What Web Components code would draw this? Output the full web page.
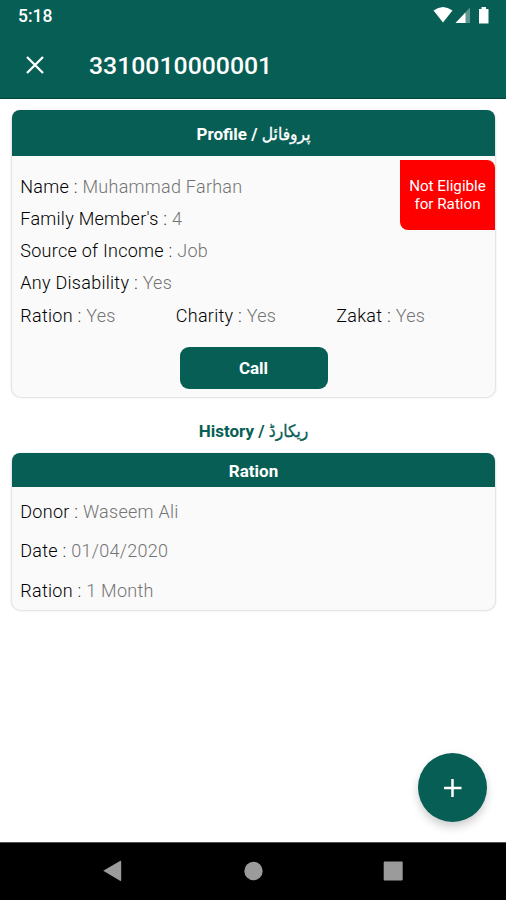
<!DOCTYPE html>
<html lang="en">
<head>
<meta charset="utf-8">
<title>Profile</title>
<style>
  html, body {
    margin: 0;
    height: 100%;
    background: #fff;
  }
  body {
    --green: #075e54;
    font-family: Roboto, "DejaVu Sans", sans-serif;
    overflow: hidden;
  }
</style>
</head>
<body>
<profile-screen></profile-screen>
<script>
class StatusBar extends HTMLElement {
  connectedCallback() {
    this.attachShadow({ mode: 'open' });
    this.shadowRoot.innerHTML = `
      <style>
        :host {
          display: flex;
          justify-content: space-between;
          height: 32px;
          padding: 0 15px 0 18px;
          color: #fff;
          font-size: 17.5px;
          font-weight: 500;
          line-height: 33px;
        }
        svg { display: block; fill: #fff; }
      </style>
      <slot></slot>
      <svg width="58" height="32" viewBox="0 0 58 32">
        <path d="M0.5 10.5Q10 3.5 19.5 10.5L10 22.5Z"/>
        <path d="M37 7.5V23H22.5Z" opacity=".35"/>
        <path d="M32.5 12.5V23H22.5Z"/>
        <path d="M46 9h2.5V7h4.5v2h2.5v14.5H46Z"/>
      </svg>
    `;
  }
}
customElements.define('status-bar', StatusBar);

class AppBar extends HTMLElement {
  connectedCallback() {
    this.attachShadow({ mode: 'open' });
    this.shadowRoot.innerHTML = `
      <style>
        :host {
          display: flex;
          align-items: center;
          gap: 45px;
          height: 67px;
          padding-left: 26px;
          color: #fff;
          border-bottom: 1px solid #044238;
          box-sizing: border-box;
        }
        svg { display: block; stroke: #fff; stroke-width: 2.3; }
        h1 {
          margin: 0;
          padding-top: 2px;
          font-size: 24.8px;
          font-weight: 500;
          line-height: 32px;
        }
      </style>
      <svg width="18" height="18" viewBox="0 0 18 18"><path d="M1 1L17 17M17 1L1 17"/></svg>
      <h1><slot></slot></h1>
    `;
  }
}
customElements.define('app-bar', AppBar);

class InfoCard extends HTMLElement {
  connectedCallback() {
    this.attachShadow({ mode: 'open' });
    this.shadowRoot.innerHTML = `
      <style>
        :host {
          display: block;
          position: relative;
          box-sizing: border-box;
          background: #fafafa;
          border: 1px solid #e4e6e6;
          border-top: 0;
          border-radius: 10px;
          box-shadow: 0 0 2px rgba(0, 0, 0, .12);
        }
        header {
          display: flex;
          align-items: center;
          justify-content: center;
          height: var(--header-height, 46px);
          padding-top: 1px;
          box-sizing: border-box;
          border-radius: 8px 8px 0 0;
          background: var(--green);
          color: #fff;
          font-size: 17px;
          font-weight: 700;
        }
        .body { padding: var(--body-padding, 0 8px); }
      </style>
      <header><slot name="title"></slot></header>
      <div class="body"><slot></slot></div>
    `;
  }
}
customElements.define('info-card', InfoCard);

class InfoField extends HTMLElement {
  connectedCallback() {
    this.attachShadow({ mode: 'open' });
    this.shadowRoot.innerHTML = `
      <style>
        :host {
          display: block;
          color: #747474;
          font-size: 18px;
          font-weight: 300;
          line-height: var(--row-height, 32.25px);
          letter-spacing: .27px;
          white-space: nowrap;
        }
        b { color: #000; font-weight: 350; }
        i { color: #333; font-style: normal; }
      </style>
      <b>${this.getAttribute('label')}</b> <i>:</i> <slot></slot>
    `;
  }
}
customElements.define('info-field', InfoField);

class StatusFlag extends HTMLElement {
  connectedCallback() {
    this.attachShadow({ mode: 'open' });
    // sits in the card's top right corner, over the rows
    this.shadowRoot.innerHTML = `
      <style>
        :host {
          position: absolute;
          top: 50px;
          right: 0;
          display: flex;
          align-items: center;
          justify-content: center;
          width: 95px;
          height: 70px;
          border-radius: 0 8px 0 8px;
          background: #fe0000;
          color: #fff;
          font-size: 15.2px;
          line-height: 18px;
          text-align: center;
        }
      </style>
      <span><slot></slot></span>
    `;
  }
}
customElements.define('status-flag', StatusFlag);

class CallButton extends HTMLElement {
  connectedCallback() {
    this.attachShadow({ mode: 'open' });
    this.shadowRoot.innerHTML = `
      <style>
        :host { display: flex; justify-content: center; }
        button {
          width: 148px;
          height: 42px;
          padding: 1px 0 0;
          border: 0;
          border-radius: 9px;
          background: var(--green);
          color: #fff;
          font: 700 17px Roboto, sans-serif;
        }
      </style>
      <button><slot></slot></button>
    `;
  }
}
customElements.define('call-button', CallButton);

class AddButton extends HTMLElement {
  connectedCallback() {
    this.attachShadow({ mode: 'open' });
    this.shadowRoot.innerHTML = `
      <style>
        :host { display: block; width: 69px; height: 69px; }
        button {
          display: grid;
          place-items: center;
          width: 100%;
          height: 100%;
          padding: 0;
          border: 0;
          border-radius: 50%;
          background: var(--green);
          box-shadow: 0 6px 8px rgba(0, 0, 0, .15), 0 1px 8px rgba(0, 0, 0, .05);
        }
        svg { stroke: #fff; stroke-width: 2.5; }
      </style>
      <button aria-label="Add"><svg width="18" height="18" viewBox="0 0 18 18"><path d="M8.5 0V18M0 9H17.5"/></svg></button>
    `;
  }
}
customElements.define('add-button', AddButton);

class NavBar extends HTMLElement {
  connectedCallback() {
    this.attachShadow({ mode: 'open' });
    this.shadowRoot.innerHTML = `
      <style>
        :host {
          display: flex;
          align-items: center;
          justify-content: space-between;
          box-sizing: border-box;
          height: 58px;
          padding: 0 103px 2px 102px;
          background: #000;
          border-top: 1px solid #555;
        }
        svg { display: block; fill: #9b9b9b; }
      </style>
      <svg width="20" height="22" viewBox="0 0 20 22"><path d="M1.2 10.7L18 1Q19.2 .5 19.2 1.7V20Q19.2 21.3 18 20.7Z"/></svg>
      <svg width="20" height="20" viewBox="0 0 20 20"><circle cx="10.5" cy="10" r="9.2"/></svg>
      <svg width="20" height="20" viewBox="0 0 20 20"><rect x=".7" y=".5" width="19" height="19" rx="1"/></svg>
    `;
  }
}
customElements.define('nav-bar', NavBar);

class ProfileScreen extends HTMLElement {
  connectedCallback() {
    this.attachShadow({ mode: 'open' });
    this.shadowRoot.innerHTML = `
      <style>
        :host {
          display: flex;
          flex-direction: column;
          height: 900px;
        }
        .top { background: var(--green); }
        main {
          display: flex;
          flex-direction: column;
          flex: 1;
          padding: 11px 10px 0 11px;
        }
        .profile {
          height: 288px;
          --body-padding: 14.6px 8.3px 0;
        }
        .flags {
          display: grid;
          grid-template-columns: 155.5px 160.5px auto;
          margin-bottom: 15px;
        }
        h2 {
          height: 55px;
          margin: 0;
          color: var(--green);
          font-size: 17px;
          font-weight: 700;
          line-height: 66px;
          text-align: center;
        }
        [lang=ur] {
          font-family: "DejaVu Sans Condensed", "DejaVu Sans", sans-serif;
          font-size: 17.3px;
          font-weight: 400;
          font-stretch: condensed;
          line-height: 1;
          -webkit-text-stroke: .3px currentColor;
        }
        .record {
          height: 158px;
          --header-height: 34px;
          --body-padding: 5px 8.3px 0;
          --row-height: 39.3px;
        }
        add-button { margin: auto 9px 20px auto; }
      </style>
      <div class="top">
        <status-bar>5:18</status-bar>
        <app-bar>3310010000001</app-bar>
      </div>
      <main>
        <info-card class="profile">
          <span slot="title">Profile / <span lang="ur">پروفائل</span></span>
          <info-field label="Name">Muhammad Farhan</info-field>
          <info-field label="Family Member's">4</info-field>
          <info-field label="Source of Income">Job</info-field>
          <info-field label="Any Disability">Yes</info-field>
          <div class="flags">
            <info-field label="Ration">Yes</info-field>
            <info-field label="Charity">Yes</info-field>
            <info-field label="Zakat">Yes</info-field>
          </div>
          <call-button>Call</call-button>
          <status-flag>Not Eligible<br>for Ration</status-flag>
        </info-card>
        <h2>History / <span lang="ur">ریکارڈ</span></h2>
        <info-card class="record">
          <span slot="title">Ration</span>
          <info-field label="Donor">Waseem Ali</info-field>
          <info-field label="Date">01/04/2020</info-field>
          <info-field label="Ration">1 Month</info-field>
        </info-card>
        <add-button></add-button>
      </main>
      <nav-bar></nav-bar>
    `;
  }
}
customElements.define('profile-screen', ProfileScreen);
</script>
</body>
</html>
